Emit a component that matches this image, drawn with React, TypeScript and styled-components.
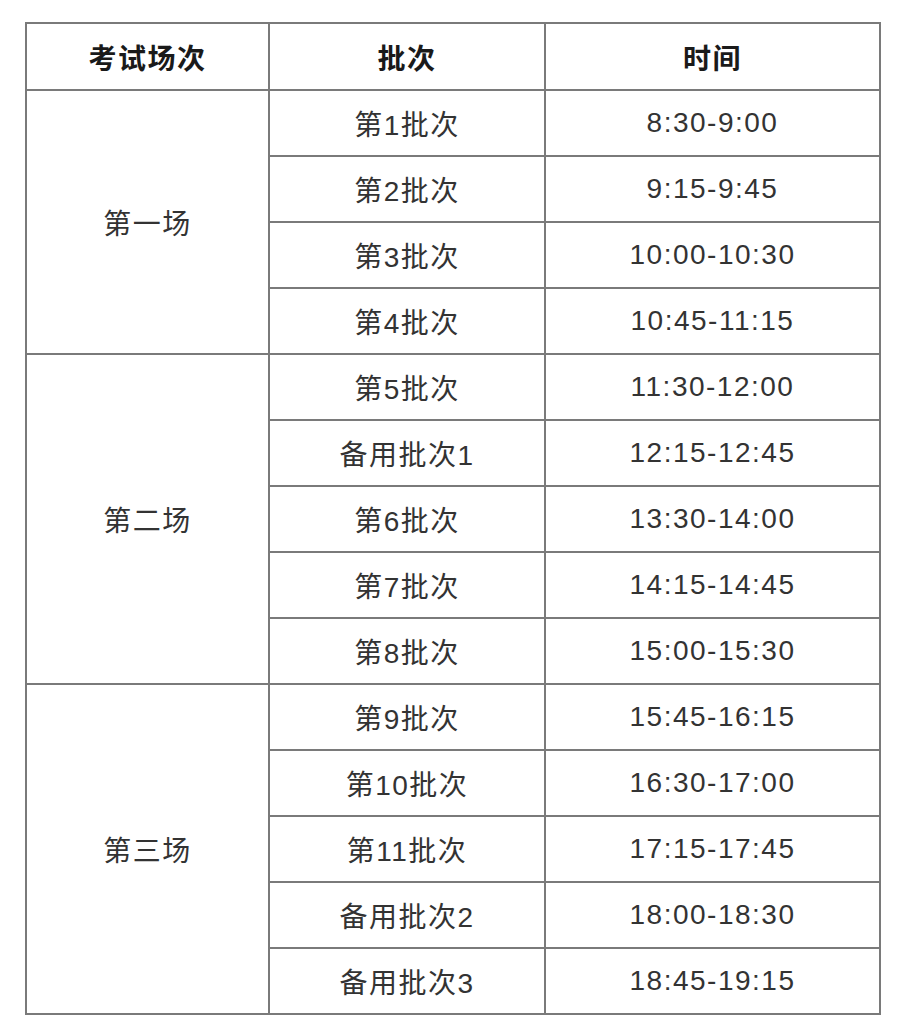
import React from "react";
import styled, { createGlobalStyle } from "styled-components";

const Global = createGlobalStyle`
  html, body { margin: 0; padding: 0; background: #ffffff; }
  body { font-family: "Liberation Sans", "Noto Sans CJK SC", Arial, sans-serif; }
`;

const Page = styled.div`
  padding: 22px 0 0 25px;
  width: 908px;
  box-sizing: border-box;
`;

const Table = styled.table`
  border-collapse: collapse;
  border: 2px solid #7a7a7a;
  table-layout: fixed;
  width: 854px;
`;

const Row = styled.tr<{ $h: number }>`
  height: ${(p) => p.$h}px;
`;

const HeadCell = styled.th`
  border: 2px solid #7a7a7a;
  font-weight: 700;
  font-size: 28px;
  letter-spacing: 1.5px;
  color: #1a1a1a;
  text-align: center;
  vertical-align: middle;
  padding: 0;
`;

const Cell = styled.td`
  border: 2px solid #7a7a7a;
  font-size: 28px;
  letter-spacing: 1.5px;
  color: #333333;
  text-align: center;
  vertical-align: middle;
  padding: 0;
`;

const groups = [
  {
    name: "第一场",
    rows: [
      ["第1批次", "8:30-9:00"],
      ["第2批次", "9:15-9:45"],
      ["第3批次", "10:00-10:30"],
      ["第4批次", "10:45-11:15"],
    ],
  },
  {
    name: "第二场",
    rows: [
      ["第5批次", "11:30-12:00"],
      ["备用批次1", "12:15-12:45"],
      ["第6批次", "13:30-14:00"],
      ["第7批次", "14:15-14:45"],
      ["第8批次", "15:00-15:30"],
    ],
  },
  {
    name: "第三场",
    rows: [
      ["第9批次", "15:45-16:15"],
      ["第10批次", "16:30-17:00"],
      ["第11批次", "17:15-17:45"],
      ["备用批次2", "18:00-18:30"],
      ["备用批次3", "18:45-19:15"],
    ],
  },
];

export default function App() {
  return (
    <Page>
      <Global />
      <Table>
        <colgroup>
          <col style={{ width: 243 }} />
          <col style={{ width: 276 }} />
          <col style={{ width: 335 }} />
        </colgroup>
        <thead>
          <Row $h={67}>
            <HeadCell>考试场次</HeadCell>
            <HeadCell>批次</HeadCell>
            <HeadCell>时间</HeadCell>
          </Row>
        </thead>
        <tbody>
          {groups.map((g) =>
            g.rows.map((r, i) => (
              <Row $h={66} key={g.name + i}>
                {i === 0 && <Cell rowSpan={g.rows.length}>{g.name}</Cell>}
                <Cell>{r[0]}</Cell>
                <Cell>{r[1]}</Cell>
              </Row>
            ))
          )}
        </tbody>
      </Table>
    </Page>
  );
}
